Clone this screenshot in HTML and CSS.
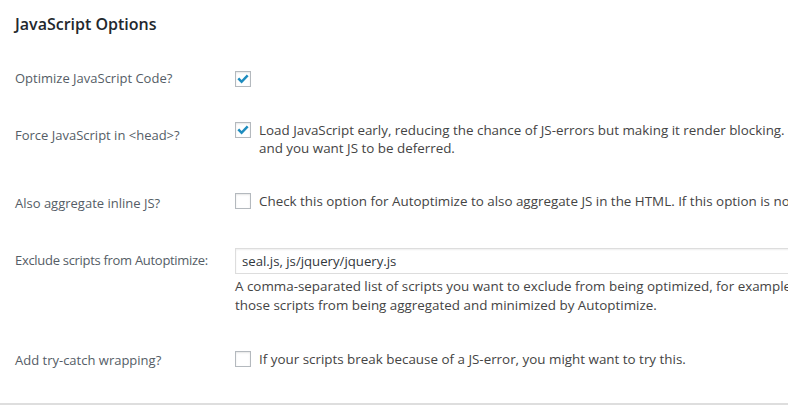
FILE: index.html
```html
<!DOCTYPE html>
<html lang="en">
<head>
<meta charset="utf-8">
<title>JavaScript Options</title>
<link rel="stylesheet" href="styles.css">
</head>
<body>
<div class="page">
  <h2 class="title">JavaScript Options</h2>
  <div class="form">
    <div class="row r1">
      <div class="th">Optimize JavaScript Code?</div>
      <div class="td">
        <span class="cb on"><svg viewBox="0 0 16 16" width="16" height="16"><path d="M2.4 8.3 L4.2 6.5 L6.6 8.9 L11.8 3.4 L13.6 5.2 L6.6 12.4 Z"/></svg></span>
      </div>
    </div>
    <div class="row r2">
      <div class="th">Force JavaScript in &lt;head&gt;?</div>
      <div class="td">
        <div class="opt">
          <span class="cb on"><svg viewBox="0 0 16 16" width="16" height="16"><path d="M2.4 8.3 L4.2 6.5 L6.6 8.9 L11.8 3.4 L13.6 5.2 L6.6 12.4 Z"/></svg></span>
          <div class="desc tight">
            <span class="line">Load JavaScript early, reducing the chance of JS-errors but making it render blocking.</span>
            <span class="line">and you want JS to be deferred.</span>
          </div>
        </div>
      </div>
    </div>
    <div class="row r3">
      <div class="th">Also aggregate inline JS?</div>
      <div class="td">
        <div class="opt">
          <span class="cb"></span>
          <div class="desc tight">
            <span class="line">Check this option for Autoptimize to also aggregate JS in the HTML. If this option is no</span>
          </div>
        </div>
      </div>
    </div>
    <div class="row r4">
      <div class="th narrow">Exclude scripts from Autoptimize:</div>
      <div class="td">
        <div class="field">seal.js, js/jquery/jquery.js</div>
        <div class="desc loose">
          <span class="line">A comma-separated list of scripts you want to exclude from being optimized, for example</span>
          <span class="line">those scripts from being aggregated and minimized by Autoptimize.</span>
        </div>
      </div>
    </div>
    <div class="row r5">
      <div class="th">Add try-catch wrapping?</div>
      <div class="td">
        <div class="opt">
          <span class="cb"></span>
          <div class="desc tight">
            <span class="line">If your scripts break because of a JS-error, you might want to try this.</span>
          </div>
        </div>
      </div>
    </div>
  </div>
  <div class="rule"></div>
</div>
</body>
</html>
```
FILE: styles.css
```css
html, body {
  margin: 0;
  padding: 0;
  background: #ffffff;
  overflow: hidden;
}
body {
  font-family: "Open Sans", "Noto Sans", sans-serif;
  font-size: 14px;
  color: #444444;
}
.page {
  width: 788px;
  overflow: hidden;
}
.title {
  margin: 13px 0 0 15px;
  font-size: 16px;
  line-height: 22px;
  font-weight: 600;
  color: #23282d;
}
.form {
  margin-top: 15px;
}
.row {
  display: flex;
  align-items: flex-start;
}
.th {
  flex: 0 0 235px;
  box-sizing: border-box;
  padding-left: 15px;
  padding-right: 10px;
  font-size: 13px;
  line-height: 18px;
  color: #555d66;
}
.th.narrow { letter-spacing: -0.3px; }
.td {
  flex: 1 1 auto;
  min-width: 0;
  line-height: 18px;
}
.r1 { height: 58px; }
.r1 .th { padding-top: 19px; }
.r1 .td { padding-top: 21px; }
.r2 { height: 72px; }
.r2 .th { padding-top: 18px; }
.r2 .td { padding-top: 14px; }
.r3 { height: 55px; }
.r3 .th { padding-top: 14px; }
.r3 .td { padding-top: 13px; }
.r4 { height: 100px; }
.r4 .th { padding-top: 16px; }
.r4 .td { padding-top: 13px; }
.r5 { height: 55px; }
.r5 .th { padding-top: 16px; }
.r5 .td { padding-top: 16px; }

.cb {
  display: block;
  flex: 0 0 16px;
  width: 16px;
  height: 16px;
  box-sizing: border-box;
  border: 1px solid #b4b9be;
  background: #ffffff;
  box-shadow: inset 0 1px 2px rgba(0, 0, 0, 0.1);
  position: relative;
}
.cb svg {
  position: absolute;
  left: -1px;
  top: -1px;
  fill: #1e8cbe;
}
.opt {
  display: flex;
  align-items: flex-start;
  gap: 8px;
}
.desc {
  font-size: 13.4px;
}
.desc .line {
  display: block;
  white-space: nowrap;
}
.desc.tight { line-height: 17.5px; }
.desc.loose { line-height: 19px; margin-top: 3px; }
.field {
  width: 600px;
  height: 26px;
  box-sizing: border-box;
  border: 1px solid #dddddd;
  border-right: 0;
  box-shadow: inset 0 1px 2px rgba(0, 0, 0, 0.07);
  padding: 0 6px;
  font-size: 13.2px;
  line-height: 24px;
  color: #32373c;
  background: #ffffff;
}
.rule {
  margin-top: 13px;
  height: 2px;
  background: #dedede;
}
```
